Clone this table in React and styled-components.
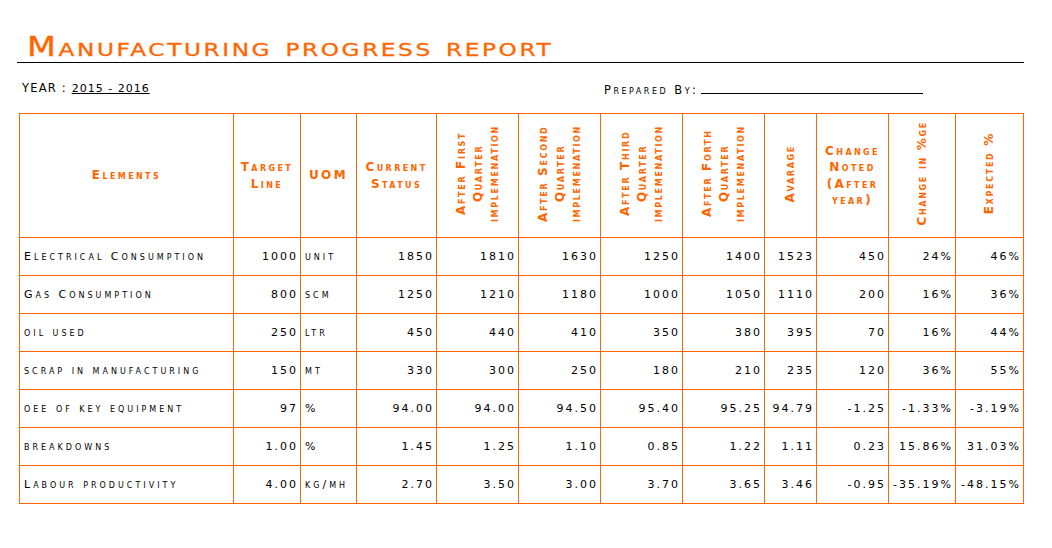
import styled, { createGlobalStyle } from "styled-components";

const ORANGE = "#ff6600";

const GlobalStyle = createGlobalStyle`
    body {
        margin: 0;
        background: #fff;
        font-family: "DejaVu Sans", "Liberation Sans", sans-serif;
    }
`;

const Page = styled.div`
    width: 1007px;
    padding: 32px 0 0 17px;
`;

const Title = styled.h1`
    margin: 0;
    padding-left: 10px;
    font-size: 26px;
    line-height: 30px;
    font-weight: normal;
    font-variant: small-caps;
    color: ${ORANGE};
    border-bottom: 1px solid #000;
`;

// the report font is an extended gothic, so widen the glyphs a little
const Wide = styled.span`
    display: inline-block;
    letter-spacing: 2px;
    transform: scaleX(1.29);
    transform-origin: left center;
    -webkit-text-stroke: 0.3px ${ORANGE};
`;

const InfoRow = styled.div`
    display: grid;
    grid-template-columns: 582px auto;
    margin-top: 17px;
    padding-left: 5px;
    font-size: 11px;
    line-height: 16px;
    color: #000;
`;

const Label = styled.span`
    font-size: 11.5px;
    letter-spacing: ${(p) => (p.$caps ? "2.5px" : "1.2px")};
    font-variant: ${(p) => (p.$caps ? "small-caps" : "normal")};
`;

const Underlined = styled.span`
    text-decoration: underline;
    letter-spacing: 1px;
`;

const Blank = styled.span`
    display: inline-block;
    width: 222px;
    height: 13px;
    margin-left: 3px;
    border-bottom: 1px solid #000;
`;

const Table = styled.table`
    margin: 14px 0 0 2px;
    border-collapse: collapse;
    table-layout: fixed;
    width: 1005px;
`;

const HeadCell = styled.th`
    height: 123px;
    padding: 0;
    border: 1px solid ${ORANGE};
    color: ${ORANGE};
    font-size: 12px;
    font-weight: bold;
    line-height: 16.5px;
    font-variant: small-caps;
    letter-spacing: 2.4px;
    text-align: center;
    vertical-align: middle;
`;

const VText = styled.span`
    display: inline-block;
    writing-mode: vertical-rl;
    transform: rotate(180deg);
    letter-spacing: 1.7px;
    text-align: center;
`;

const Cell = styled.td`
    height: 37px;
    padding: 0 2px 0 4px;
    border: 1px solid ${ORANGE};
    font-size: 11px;
    color: #000;
    font-variant: small-caps;
    letter-spacing: ${(p) => (p.$num ? "2px" : "3px")};
    text-align: ${(p) => (p.$num ? "right" : "left")};
    vertical-align: middle;
    white-space: nowrap;
    overflow: hidden;
`;

const widths = [214, 67, 56, 80, 82, 82, 82, 82, 52, 72, 67, 68];

const rows = [
    ["Electrical Consumption", "1000", "unit", "1850", "1810", "1630", "1250", "1400", "1523", "450", "24%", "46%"],
    ["Gas Consumption", "800", "scm", "1250", "1210", "1180", "1000", "1050", "1110", "200", "16%", "36%"],
    ["oil used", "250", "ltr", "450", "440", "410", "350", "380", "395", "70", "16%", "44%"],
    ["scrap in manufacturing", "150", "mt", "330", "300", "250", "180", "210", "235", "120", "36%", "55%"],
    ["oee of key equipment", "97", "%", "94.00", "94.00", "94.50", "95.40", "95.25", "94.79", "-1.25", "-1.33%", "-3.19%"],
    ["breakdowns", "1.00", "%", "1.45", "1.25", "1.10", "0.85", "1.22", "1.11", "0.23", "15.86%", "31.03%"],
    ["Labour productivity", "4.00", "kg/mh", "2.70", "3.50", "3.00", "3.70", "3.65", "3.46", "-0.95", "-35.19%", "-48.15%"],
];

const quarters = ["First", "Second", "Third", "Forth"];

const App = () => {
    return (
        <Page>
            <GlobalStyle />
            <Title><Wide>Manufacturing progress report</Wide></Title>
            <InfoRow>
                <div>
                    <Label>YEAR : </Label>
                    <Underlined>2015 - 2016</Underlined>
                </div>
                <div>
                    <Label $caps>Prepared By:</Label>
                    <Blank />
                </div>
            </InfoRow>
            <Table>
                <colgroup>
                    {widths.map((w, i) => (
                        <col key={i} style={{ width: w }} />
                    ))}
                </colgroup>
                <thead>
                    <tr>
                        <HeadCell>Elements</HeadCell>
                        <HeadCell>Target<br />Line</HeadCell>
                        <HeadCell>UOM</HeadCell>
                        <HeadCell>Current<br />Status</HeadCell>
                        {quarters.map((q) => (
                            <HeadCell key={q}>
                                <VText>After {q}<br />Quarter<br />implemenation</VText>
                            </HeadCell>
                        ))}
                        <HeadCell><VText>Avarage</VText></HeadCell>
                        <HeadCell>Change<br />Noted<br />(After<br />year)</HeadCell>
                        <HeadCell><VText>Change in %ge</VText></HeadCell>
                        <HeadCell><VText>Expected %</VText></HeadCell>
                    </tr>
                </thead>
                <tbody>
                    {rows.map((row, r) => (
                        <tr key={r}>
                            {row.map((v, i) => (
                                <Cell key={i} $num={i !== 0 && i !== 2}>{v}</Cell>
                            ))}
                        </tr>
                    ))}
                </tbody>
            </Table>
        </Page>
    );
};

export default App;
